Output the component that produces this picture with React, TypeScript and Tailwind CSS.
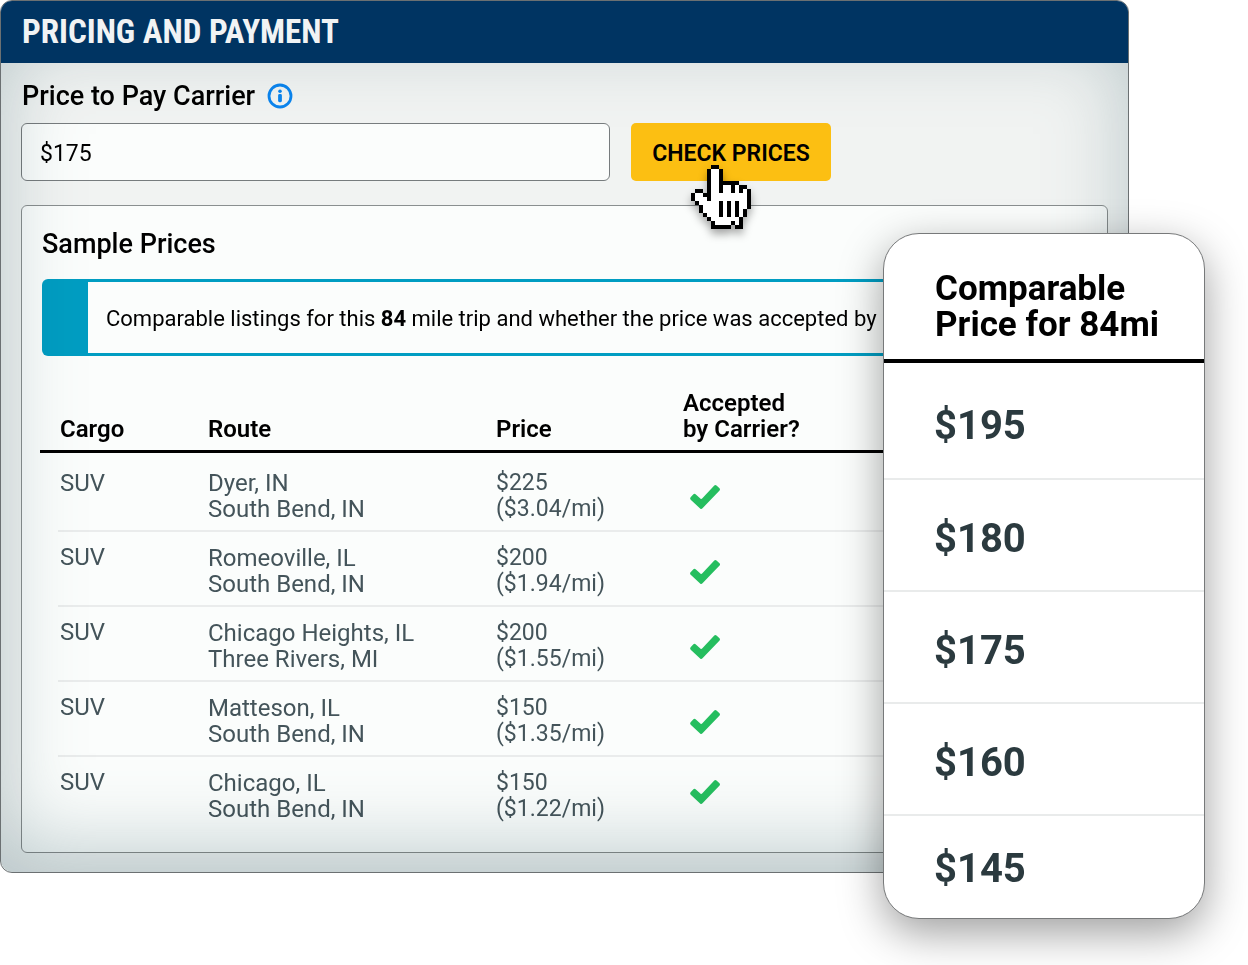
const listings = [
  { from: "Dyer, IN", to: "South Bend, IN", price: "$225", rate: "($3.04/mi)" },
  { from: "Romeoville, IL", to: "South Bend, IN", price: "$200", rate: "($1.94/mi)" },
  { from: "Chicago Heights, IL", to: "Three Rivers, MI", price: "$200", rate: "($1.55/mi)" },
  { from: "Matteson, IL", to: "South Bend, IN", price: "$150", rate: "($1.35/mi)" },
  { from: "Chicago, IL", to: "South Bend, IN", price: "$150", rate: "($1.22/mi)" },
];

const comparablePrices = ["$195", "$180", "$175", "$160", "$145"];

// Hand pointer bitmap: "#" is outline, "o" is fill.
const handRows = [
  ".....##........",
  "....#oo#.......",
  "....#oo#.......",
  "....#oo#.......",
  "....#oo#####...",
  "....#oo#oo#o##.",
  ".##.#oo#oo#o#o#",
  "#oo##ooooooooo#",
  "#ooo#ooooooooo#",
  ".#ooooo#o#o#oo#",
  "..#oooo#o#o#oo#",
  "..#oooo#o#o#o#.",
  "...#ooo#o#o#o#.",
  "....#ooooooo#..",
  ".....#oooo#o#..",
  ".....#####.##..",
];

function HandPointer() {
  return (
    <svg
      viewBox="0 0 15 16"
      shapeRendering="crispEdges"
      aria-hidden="true"
      className="pointer-events-none absolute left-[60px] top-[42px] z-10 h-16 w-[60px] drop-shadow-[0_5px_4px_rgba(0,0,0,0.35)]"
    >
      {handRows.flatMap((row, y) =>
        row.split("").map((cell, x) =>
          cell === "." ? null : (
            <rect key={`${x}-${y}`} x={x} y={y} width="1" height="1" fill={cell === "#" ? "#000" : "#fff"} />
          ),
        ),
      )}
    </svg>
  );
}

function InfoIcon() {
  return (
    <svg viewBox="0 0 26 26" className="size-[26px]" aria-hidden="true">
      <circle cx="13" cy="13" r="11" fill="none" stroke="#0a84ee" strokeWidth="2.8" />
      <circle cx="13" cy="8.2" r="1.8" fill="#0a84ee" />
      <rect x="11.1" y="11" width="3.8" height="8.2" rx="1.4" fill="#0a84ee" />
    </svg>
  );
}

function CheckIcon() {
  return (
    <svg viewBox="0 0 32 26" className="h-[26px] w-8" role="img" aria-label="Yes">
      <path
        d="M1.6 13.2 4.4 10.3Q5.5 9.3 6.6 10.2L11.6 14.7Q12.4 15.2 13.1 14.5L25.3 1.5Q26.4.5 27.5 1.5L30.5 4.3Q31.5 5.3 30.6 6.4L13.5 24.3Q12.3 25.5 11.1 24.4L1.7 15.7Q.5 14.5 1.6 13.2Z"
        fill="#25be5f"
      />
    </svg>
  );
}

function SamplePrices() {
  return (
    <section className="mt-6 rounded-md border border-[#8a8f90] bg-[#fbfdfc] pb-5 pl-[18px]">
      <h2 className="mt-[22px] pl-0.5 text-[27px] font-medium leading-8 text-black">Sample Prices</h2>
      <p className="ml-0.5 mt-[19px] flex h-[77px] items-center overflow-hidden whitespace-nowrap rounded-l-md border-y-[3px] border-l-[46px] border-[#009dc2] pl-[18px] pt-0.5 text-[22px] text-black">
        <span>
          Comparable listings for this <b className="font-bold">84</b> mile trip and whether the price was accepted by
        </span>
      </p>
      <table className="mt-[34px] w-full table-fixed text-left text-2xl leading-[26px]">
        <thead>
          <tr className="border-b-[3px] border-black align-bottom text-black">
            <th scope="col" className="w-[168px] pb-2 pl-5 font-semibold">Cargo</th>
            <th scope="col" className="w-[288px] pb-2 font-semibold">Route</th>
            <th scope="col" className="w-[187px] pb-2 font-semibold">Price</th>
            <th scope="col" className="pb-2 font-semibold">
              Accepted
              <br />
              by Carrier?
            </th>
          </tr>
        </thead>
        <tbody className="text-[#44545a]">
          {listings.map((row) => (
            <tr key={row.from} className="group align-top">
              <td className="relative pl-5 pt-[13px] group-first:pt-[17px] after:absolute after:-bottom-px after:left-[18px] after:right-0 after:h-0.5 after:bg-[#eaecec] group-last:after:hidden">
                SUV
              </td>
              <td className="border-b-2 border-[#eaecec] pb-2 pt-[13px] group-first:pt-[17px] group-last:border-transparent">
                {row.from}
                <br />
                {row.to}
              </td>
              <td className="border-b-2 border-[#eaecec] pb-2 pt-[13px] text-[23px] group-first:pt-[17px] group-last:border-transparent">
                {row.price}
                <br />
                {row.rate}
              </td>
              <td className="border-b-2 border-[#eaecec] pl-1.5 pt-[27px] group-first:pt-[31px] group-last:border-transparent group-last:pt-[22px]">
                <CheckIcon />
              </td>
            </tr>
          ))}
        </tbody>
      </table>
    </section>
  );
}

function ComparableCard() {
  return (
    <aside className="absolute right-[43px] top-[233px] z-20 w-[322px] overflow-hidden rounded-[36px] border border-[#77797a] bg-white shadow-[0_14px_44px_rgba(0,0,0,0.38)]">
      <table className="w-full text-left">
        <thead>
          <tr className="border-b-4 border-black">
            <th scope="col" className="pb-4 pl-[51px] pt-[37px] text-[35px]/9 font-bold text-black">
              Comparable
              <br />
              Price for 84mi
            </th>
          </tr>
        </thead>
        <tbody>
          {comparablePrices.map((price) => (
            <tr key={price} className="group border-b-2 border-[#e9ebeb] last:border-0">
              <td className="h-28 pl-[50px] pt-[7px] text-[40px] font-bold text-[#2b3a3f] group-first:h-[118px] group-first:pt-2.5 group-last:h-[103px] group-last:pt-1">
                {price}
              </td>
            </tr>
          ))}
        </tbody>
      </table>
    </aside>
  );
}

export default function App() {
  return (
    <main className="relative min-h-screen bg-white pr-[119px] font-['Roboto',sans-serif]">
      <div className="overflow-hidden rounded-xl border border-[#6b7072] bg-[#f1f3f2]">
        <header className="flex h-[62px] items-center bg-[#003462] px-[21px]">
          <h1 className="font-['Roboto_Condensed','Roboto',sans-serif] text-[33px]/[60px] font-bold text-[#f1f3f4]">PRICING AND PAYMENT</h1>
        </header>
        <div className="relative isolate px-5 pb-[19px] pt-[17px]">
          <form onSubmit={(event) => event.preventDefault()}>
            <div className="flex items-center gap-3">
              <label htmlFor="carrier-price" className="pl-px text-[27px] font-medium leading-8 text-black">
                Price to Pay Carrier
              </label>
              <button type="button" aria-label="About this price">
                <InfoIcon />
              </button>
            </div>
            <div className="mt-[11px] flex items-center gap-[21px]">
              <input
                id="carrier-price"
                defaultValue="$175"
                className="h-[58px] w-[589px] rounded-md border border-[#777c7e] bg-[#fbfdfc] px-[18px] pt-0.5 text-[23px] text-black"
              />
              <div className="relative">
                <button type="submit" className="h-[58px] w-[200px] rounded-[5px] bg-[#fcbf12] pt-1 text-[23px] font-semibold text-black">
                  CHECK PRICES
                </button>
                <HandPointer />
              </div>
            </div>
          </form>
          <SamplePrices />
          <div className="pointer-events-none absolute inset-0 rounded-b-xl mix-blend-multiply shadow-[inset_0_-24px_80px_rgba(95,125,135,0.38)]" />
        </div>
      </div>
      <ComparableCard />
    </main>
  );
}
